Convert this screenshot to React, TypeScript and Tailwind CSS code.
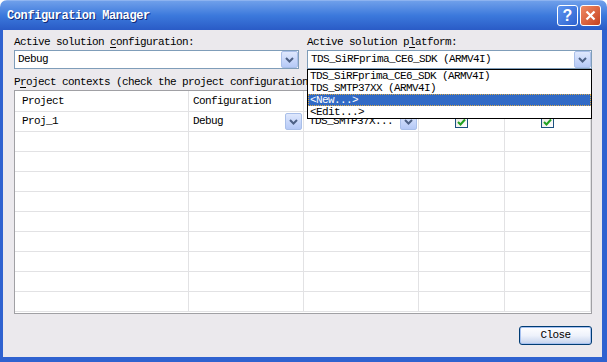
import React from 'react';

const ComboButton: React.FC<{ className?: string }> = ({ className = '' }) => (
  <div
    className={`w-[17px] h-[17px] rounded-[2px] border border-[#a9bfe9] bg-linear-to-b from-[#dfe8fd] to-[#b5c9f6] flex items-center justify-center ${className}`}
  >
    <svg width="9" height="6" viewBox="0 0 9 6">
      <polyline points="1,1 4.5,4.5 8,1" fill="none" stroke="#4d6185" strokeWidth="2" />
    </svg>
  </div>
);

const CheckBox: React.FC = () => (
  <div className="w-[13px] h-[13px] border border-[#1c5180] bg-linear-to-br from-[#e6e6e0] to-white flex items-center justify-center">
    <svg width="9" height="8" viewBox="0 0 9 8">
      <polyline points="1,4 3.5,6.5 8,1.5" fill="none" stroke="#21a121" strokeWidth="2" />
    </svg>
  </div>
);

const Underlined: React.FC<{ ch: string }> = ({ ch }) => <span className="underline underline-offset-2">{ch}</span>;

const cols = ['w-[174px]', 'w-[115px]', 'w-[115px]', 'w-[86px]', 'w-[86px]'];

export default function App() {
  const emptyRows = Array.from({ length: 9 });

  return (
    <div className="w-[607px] h-[362px] bg-white overflow-hidden font-['Liberation_Mono',monospace] text-[11px] tracking-[-0.6px] text-black">
      <div className="w-full h-full flex flex-col rounded-t-[7px] overflow-hidden">
        {/* title bar */}
        <div className="h-[30px] shrink-0 flex items-center pl-[7px] pr-[6px] bg-linear-to-b from-[#6f9fea] via-[#3c79dc] to-[#2a5bc6] border-t border-[#8db3f0]">
          <div className="flex-1 text-white font-bold text-[12px] tracking-[-0.4px] [text-shadow:1px_1px_0_#102a78]">
            Configuration Manager
          </div>
          <div className="flex gap-[2px]">
            <div className="w-[21px] h-[21px] rounded-[3px] border border-white bg-linear-to-br from-[#5e95ef] to-[#2f62d0] flex items-center justify-center text-white font-bold text-[16px] font-['Liberation_Sans',sans-serif] tracking-normal leading-none">
              ?
            </div>
            <div className="w-[21px] h-[21px] rounded-[3px] border border-white bg-linear-to-br from-[#f08a63] to-[#c5401c] flex items-center justify-center">
              <svg width="11" height="11" viewBox="0 0 11 11">
                <path d="M1.5 1.5 L9.5 9.5 M9.5 1.5 L1.5 9.5" stroke="white" strokeWidth="2.2" />
              </svg>
            </div>
          </div>
        </div>

        {/* frame + body */}
        <div className="flex-1 flex border-l-[3px] border-r-[5px] border-b-[5px] border-[#2f62d0]">
          <div className="flex-1 flex flex-col bg-[#ebe9ed] pl-[11px] pr-[10px] pt-[5px]">
            <div className="flex gap-[8px]">
              <div className="flex-1 flex flex-col">
                <div className="h-[14px] leading-[14px]">
                  Active solution <Underlined ch="c" />onfiguration:
                </div>
                <div className="mt-[1px] h-[19px] border border-[#7f9db9] bg-white flex items-center">
                  <span className="flex-1 pl-[3px]">Debug</span>
                  <ComboButton />
                </div>
              </div>
              <div className="flex-1 flex flex-col">
                <div className="h-[14px] leading-[14px]">
                  Active solution p<Underlined ch="l" />atform:
                </div>
                <div className="relative mt-[1px] h-[19px] border border-[#7f9db9] bg-white flex items-center">
                  <span className="flex-1 pl-[3px]">TDS_SiRFprima_CE6_SDK (ARMV4I)</span>
                  <ComboButton />
                  <div className="absolute z-10 left-[-1px] right-[-1px] top-[18px] border border-black bg-white flex flex-col">
                    <div className="h-[12px] leading-[12px] pl-[2px]">TDS_SiRFprima_CE6_SDK (ARMV4I)</div>
                    <div className="h-[12px] leading-[12px] pl-[2px]">TDS_SMTP37XX (ARMV4I)</div>
                    <div className="h-[12px] leading-[10px] pl-[1px] bg-[#316ac5] text-white border border-dotted border-[#d8a848]">
                      &lt;New...&gt;
                    </div>
                    <div className="h-[12px] leading-[12px] pl-[2px]">&lt;Edit...&gt;</div>
                  </div>
                </div>
              </div>
            </div>

            {/* label runs under the open list; only the visible part is drawn */}
            <div className="mt-[6px] h-[14px] leading-[14px] w-[293px] whitespace-nowrap overflow-hidden">
              P<Underlined ch="r" />oject contexts (check the project configuration
            </div>

            {/* grid */}
            <div className="mt-[1px] h-[224px] border border-[#a0a0a4] bg-white flex flex-col overflow-hidden">
              <div className="h-[21px] shrink-0 flex border-b border-[#e2e2e4]">
                {['Project', 'Configuration', '', '', ''].map((h, i) => (
                  <div
                    key={i}
                    className={`${cols[i]} h-full flex items-center border-r border-[#e2e2e4] ${i === 0 ? 'pl-[7px]' : 'pl-[4px]'}`}
                  >
                    {h}
                  </div>
                ))}
              </div>

              <div className="h-[20px] shrink-0 flex border-b border-[#e2e2e4]">
                <div className={`${cols[0]} h-full flex items-center pl-[7px] border-r border-[#e2e2e4]`}>Proj_1</div>
                <div className={`${cols[1]} h-full flex items-center pl-[4px] pr-[1px] border-r border-[#e2e2e4]`}>
                  <span className="flex-1">Debug</span>
                  <ComboButton />
                </div>
                <div className={`${cols[2]} h-full flex items-center pl-[5px] pr-[1px] border-r border-[#e2e2e4]`}>
                  <span className="flex-1 whitespace-nowrap">TDS_SMTP37X...</span>
                  <ComboButton />
                </div>
                <div className={`${cols[3]} h-full flex items-center justify-center border-r border-[#e2e2e4]`}>
                  <CheckBox />
                </div>
                <div className={`${cols[4]} h-full flex items-center justify-center border-r border-[#e2e2e4]`}>
                  <CheckBox />
                </div>
              </div>

              {emptyRows.map((_, r) => (
                <div key={r} className="h-[20px] shrink-0 flex border-b border-[#e2e2e4]">
                  {cols.map((c, i) => (
                    <div key={i} className={`${c} h-full border-r border-[#e2e2e4]`} />
                  ))}
                </div>
              ))}
            </div>

            <div className="flex justify-end mt-[12px]">
              <button className="w-[73px] h-[19px] rounded-[3px] border border-[#003c74] bg-linear-to-b from-white via-[#eef2fb] to-[#c4d2ec] shadow-[inset_0_0_0_1px_#a6c1f0] text-[11px] font-normal tracking-[-0.6px] font-['Liberation_Mono',monospace]">
                Close
              </button>
            </div>
          </div>
        </div>
      </div>
    </div>
  );
}
